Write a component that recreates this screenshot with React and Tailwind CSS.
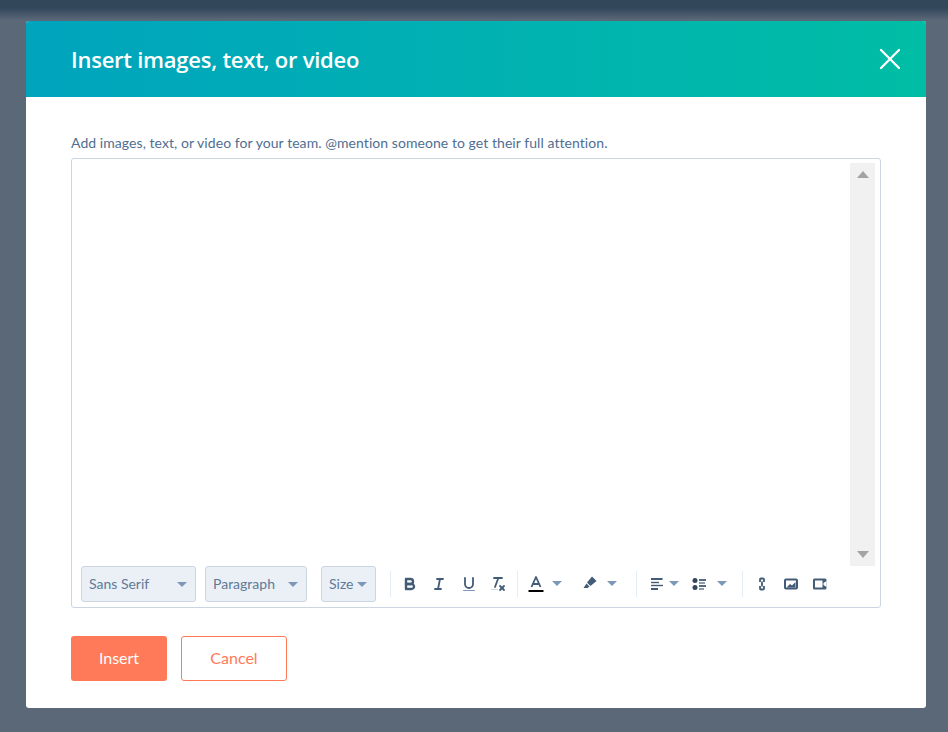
import { X } from "lucide-react";

function Caret({ className = "" }) {
  return <span className={`block w-0 h-0 border-x-[5px] border-x-transparent border-t-[5px] border-t-[#7c98b6] ${className}`} />;
}

function SelectBox({ label, width, className = "" }) {
  return (
    <div className={`flex items-center justify-between h-9 pl-[7px] pr-2 bg-[#eaf0f6] border border-[#cbd6e2] rounded-[3px] text-sm text-[#5f7a96] ${width} ${className}`}>
      <span className="-mt-px">{label}</span>
      <Caret />
    </div>
  );
}

function Divider({ className = "" }) {
  return <span className={`block w-px h-[26px] bg-[#e5edf4] ${className}`} />;
}

function Icon({ children, className = "" }) {
  return (
    <svg viewBox="0 0 18 18" fill="none" stroke="#425b76" strokeWidth="2" strokeLinecap="round" strokeLinejoin="round" className={`w-[18px] h-[18px] shrink-0 ${className}`}>
      {children}
    </svg>
  );
}

function Toolbar() {
  return (
    <div className="flex items-center h-9 ml-[9px]">
      <SelectBox label="Sans Serif" width="w-[115px]" />
      <SelectBox label="Paragraph" width="w-[102px]" className="ml-[9px]" />
      <SelectBox label="Size" width="w-[55px]" className="ml-[14px]" />
      <Divider className="ml-[14px]" />
      <Icon className="ml-[10px]">
        <path d="M5,4H9.5A2.5,2.5,0,0,1,12,6.5v0A2.5,2.5,0,0,1,9.5,9H5V4Z" strokeWidth="2.4" />
        <path d="M5,9h5.5A2.5,2.5,0,0,1,13,11.5v0A2.5,2.5,0,0,1,10.5,14H5V9Z" strokeWidth="2.4" />
      </Icon>
      <Icon className="ml-[11px]">
        <line x1="7" x2="13" y1="4" y2="4" strokeWidth="1.8" />
        <line x1="5" x2="11" y1="14" y2="14" strokeWidth="1.8" />
        <line x1="8" x2="10" y1="14" y2="4" strokeWidth="1.8" />
      </Icon>
      <Icon className="ml-[12px]">
        <path d="M5,3V9a4,4,0,0,0,4,4H9a4,4,0,0,0,4-4V3" strokeWidth="1.8" />
        <rect x="3" y="15" width="12" height="1" rx=".5" fill="#7c98b6" stroke="none" />
      </Icon>
      <Icon className="ml-[11px]">
        <line x1="5" x2="13" y1="3" y2="3" strokeWidth="1.8" />
        <line x1="6" x2="9.35" y1="12" y2="3" strokeWidth="1.8" />
        <line x1="11" x2="15" y1="11" y2="15" strokeWidth="1.8" />
        <line x1="15" x2="11" y1="11" y2="15" strokeWidth="1.8" />
        <rect x="2" y="14" width="7" height="1" rx=".5" fill="#cbd6e2" stroke="none" />
      </Icon>
      <Divider className="ml-[10px]" />
      <Icon className="ml-[9px]">
        <polyline points="4.5,12 9,2 13.5,12" strokeWidth="1.8" strokeLinecap="butt" />
        <line x1="11.8" x2="6.2" y1="9" y2="9" strokeWidth="1.8" />
        <line x1="1.5" x2="16.5" y1="16" y2="16" stroke="#000000" strokeLinecap="butt" />
      </Icon>
      <Caret className="ml-[7px] -mt-[2px]" />
      <svg viewBox="0 0 18 18" className="w-[18px] h-[18px] ml-[19px] -mt-[2px] shrink-0">
        <path d="M11 2.5 L15.5 7 L9.5 12 L6 8.5 Z" fill="#425b76" />
        <path d="M5.5 9.5 L8.5 12.5 L6.5 14 L2.5 14 Z" fill="#425b76" />
      </svg>
      <Caret className="ml-[8px] -mt-[2px]" />
      <Divider className="ml-[19px]" />
      <Icon className="ml-[11px]">
        <line x1="3" x2="14.5" y1="4" y2="4" strokeLinecap="butt" />
        <line x1="3" x2="11" y1="7.5" y2="7.5" strokeWidth="1.4" strokeLinecap="butt" />
        <line x1="3" x2="15" y1="10.5" y2="10.5" strokeWidth="1.4" strokeLinecap="butt" />
        <line x1="3" x2="10" y1="14" y2="14" strokeLinecap="butt" />
      </Icon>
      <Caret className="ml-[3px] -mt-[2px]" />
      <Icon className="ml-[12px]">
        <line x1="8" x2="15" y1="5" y2="5" strokeWidth="1.8" strokeLinecap="butt" />
        <line x1="8" x2="14" y1="8" y2="8" strokeWidth="1.2" strokeLinecap="butt" />
        <line x1="8" x2="15" y1="11" y2="11" strokeWidth="1.8" strokeLinecap="butt" />
        <line x1="8" x2="13" y1="14" y2="14" strokeWidth="1.2" strokeLinecap="butt" />
        <circle cx="4" cy="5.5" r="2.5" fill="#33475b" stroke="none" />
        <circle cx="4" cy="12.5" r="2.5" fill="#33475b" stroke="none" />
      </Icon>
      <Caret className="ml-[8px] -mt-[2px]" />
      <Divider className="ml-[15px]" />
      <svg viewBox="0 0 18 18" className="w-[18px] h-[18px] ml-[10px] shrink-0">
        <path d="M7 7 V4.5 a1 1 0 0 1 1 -1 h2 a1 1 0 0 1 1 1 V7 M7 11 V13.5 a1 1 0 0 0 1 1 h2 a1 1 0 0 0 1 -1 V11" fill="none" stroke="#425b76" strokeWidth="1.8" />
        <line x1="9" x2="9" y1="6.5" y2="11.5" stroke="#425b76" strokeWidth="1.8" />
      </svg>
      <svg viewBox="0 0 18 18" className="w-[18px] h-[18px] ml-[11px] shrink-0">
        <rect x="3" y="4.5" width="12" height="9" rx="1" fill="none" stroke="#425b76" strokeWidth="2" />
        <path d="M4.5 12.5 L8 9 L10 10.5 L13.5 7 V12.5 Z" fill="#425b76" />
      </svg>
      <svg viewBox="0 0 18 18" className="w-[18px] h-[18px] ml-[11px] shrink-0">
        <path d="M3.5 3.5 H14 a1.5 1.5 0 0 1 1.5 1.5 V13 a1.5 1.5 0 0 1 -1.5 1.5 H3.5 a1.5 1.5 0 0 1 -1.5 -1.5 V5 a1.5 1.5 0 0 1 1.5 -1.5 Z" fill="#425b76" />
        <rect x="4" y="5.5" width="7.5" height="7" fill="#ffffff" />
        <path d="M15.5 6 V12 L12.5 10 V8 Z" fill="#ffffff" />
      </svg>
    </div>
  );
}

export default function App() {
  return (
    <div className="min-h-[732px] pt-[21px] pl-[26px] pr-[22px] pb-6 bg-[#5a6878] bg-[linear-gradient(to_bottom,#33475b_0px,#33475b_8px,#5a6878_20px)] font-['Lato',sans-serif]">
      <div className="bg-white rounded-[3px] overflow-hidden h-[687px]">
        <div className="flex items-center justify-between h-[76px] pl-[45px] pr-[18px] bg-gradient-to-r from-[#00a4bd] to-[#00bda5]">
          <h1 className="text-[22px] font-semibold text-white font-['Open_Sans',sans-serif] tracking-[-0.25px]">Insert images, text, or video</h1>
          <X size={36} color="#ffffff" strokeWidth={1.5} />
        </div>
        <div className="px-[45px] pt-[37px]">
          <p className="text-sm leading-[18px] tracking-[0.06px] text-[#506e91]">Add images, text, or video for your team. @mention someone to get their full attention.</p>
          <div className="mt-[6px] h-[450px] border border-[#cbd6e2] rounded-[3px] flex flex-col">
            <div className="flex justify-end pt-1 pr-[5px]">
              <div className="w-[25px] h-[403px] bg-[#f1f1f1] flex flex-col items-center justify-between py-2">
                <span className="block w-0 h-0 border-x-[6px] border-x-transparent border-b-[7px] border-b-[#a3a3a3]" />
                <span className="block w-0 h-0 border-x-[6px] border-x-transparent border-t-[7px] border-t-[#a3a3a3]" />
              </div>
            </div>
            <Toolbar />
          </div>
          <div className="flex gap-[14px] mt-7">
            <button className="w-[96px] h-[45px] rounded-[3px] bg-[#ff7a59] text-white text-base pb-0.5">Insert</button>
            <button className="w-[106px] h-[45px] rounded-[3px] bg-white border border-[#ff7a59] text-[#ff7a59] text-base pb-0.5">Cancel</button>
          </div>
        </div>
      </div>
    </div>
  );
}
